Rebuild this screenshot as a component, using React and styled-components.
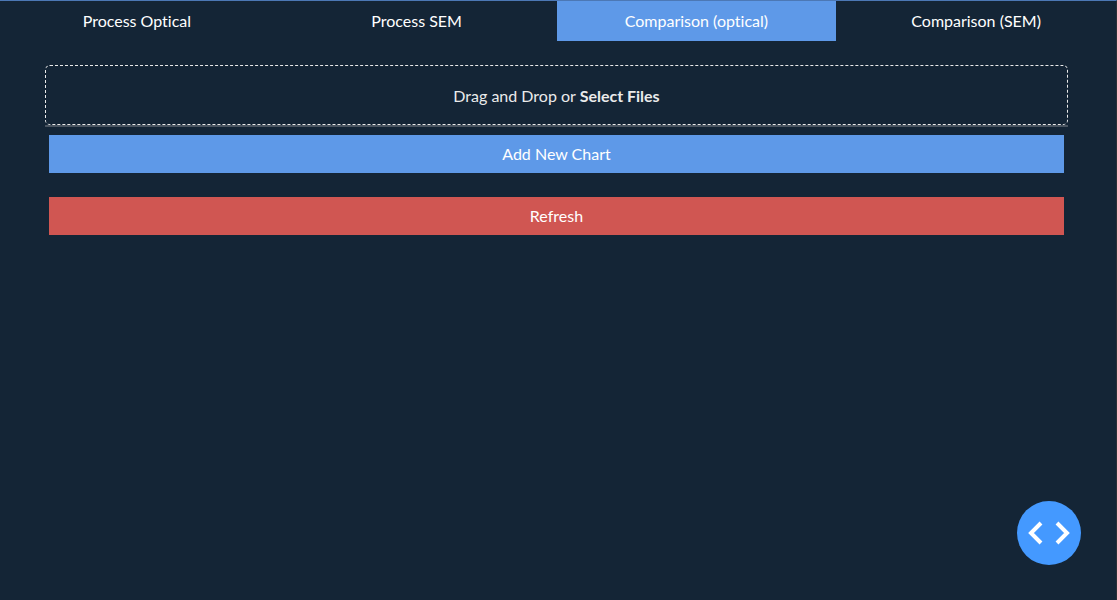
import React from "react";
import styled, { createGlobalStyle } from "styled-components";

const GlobalStyle = createGlobalStyle`
  * { box-sizing: border-box; }
  body {
    margin: 0;
    background: #142536;
    color: #ebebeb;
    font-family: Lato, sans-serif;
    font-size: 16px;
    line-height: 24px;
    font-variant-ligatures: none;
  }
`;

const Page = styled.div`
  min-height: 100vh;
  border-top: 1px solid #4c78b5;
  border-right: 1px solid #2b2f35;
  overflow: hidden;
`;

const Tabs = styled.nav`
  display: flex;
  margin-left: -3px;
`;

const Tab = styled.button`
  flex: 1 1 0;
  height: 40px;
  padding: 0;
  border: 0;
  background: ${({ $active }) => ($active ? "#5e99e8" : "transparent")};
  color: #fff;
  font: inherit;
  font-variant-ligatures: none;
  cursor: pointer;
`;

const Content = styled.main`
  margin: 24px 48px 0 45px;
`;

const DropZone = styled.label`
  display: block;
  height: 60px;
  border: 1px dashed #ebebeb;
  border-radius: 5px;
  line-height: 60px;
  text-align: center;
  cursor: pointer;
`;

const FileInput = styled.input`
  position: absolute;
  width: 1px;
  height: 1px;
  opacity: 0;
`;

const Divider = styled.hr`
  height: 2px;
  margin: 0;
  border: 0;
  background: #4a5561;
`;

const Actions = styled.div`
  display: flex;
  flex-direction: column;
  gap: 24px;
  padding: 8px 4px;
`;

const Action = styled.button`
  height: 38px;
  padding: 0;
  border: 0;
  background: ${({ $danger }) => ($danger ? "#d05652" : "#5e99e8")};
  color: #fff;
  font: inherit;
  cursor: pointer;
`;

const DebugButton = styled.button`
  position: fixed;
  right: 36px;
  bottom: 35px;
  width: 64px;
  height: 64px;
  padding: 0;
  border: 0;
  border-radius: 50%;
  background: #4499ff;
  cursor: pointer;

  svg {
    display: block;
  }
`;

const TABS = ["Process Optical", "Process SEM", "Comparison (optical)", "Comparison (SEM)"];

export default function App() {
  const [active, setActive] = React.useState(2);
  return (
    <Page>
      <GlobalStyle />
      <Tabs>
        {TABS.map((name, i) => (
          <Tab key={name} type="button" $active={i === active} onClick={() => setActive(i)}>
            {name}
          </Tab>
        ))}
      </Tabs>
      <Content>
        <DropZone>
          Drag and Drop or <strong>Select Files</strong>
          <FileInput type="file" multiple />
        </DropZone>
        <Divider />
        <Actions>
          <Action type="button">Add New Chart</Action>
          <Action type="button" $danger>Refresh</Action>
        </Actions>
      </Content>
      <DebugButton type="button" aria-label="Debug tools">
        <svg width="64" height="64" viewBox="0 0 64 64" fill="none" stroke="#fff" strokeWidth="4">
          <path d="M24 22L14 32L24 42M40 22L50 32L40 42" />
        </svg>
      </DebugButton>
    </Page>
  );
}
